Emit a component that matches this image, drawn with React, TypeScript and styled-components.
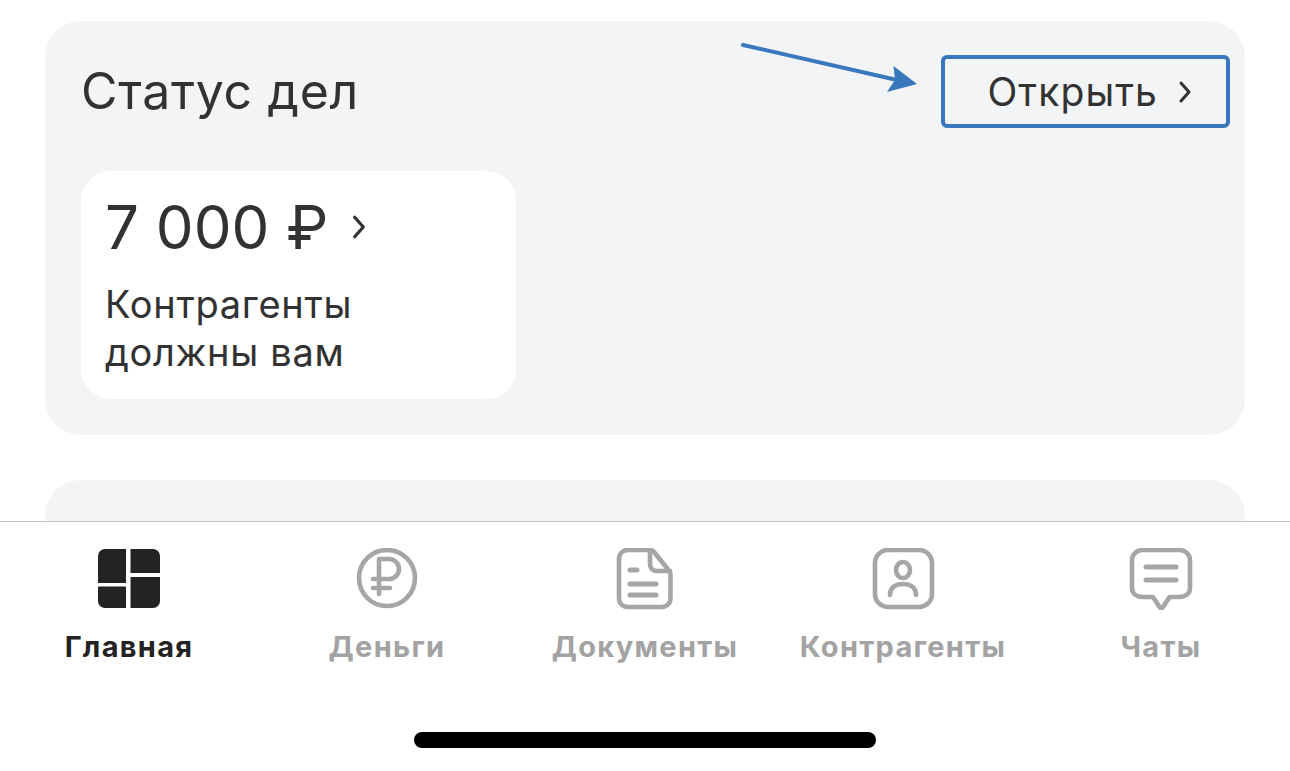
import React from 'react';
import styled, { createGlobalStyle } from 'styled-components';

const Global = createGlobalStyle`
  html, body { margin: 0; padding: 0; background: #fff; }
  body { font-family: Inter, "Noto Sans", sans-serif; }
`;

const Screen = styled.div`
  position: relative;
  width: 1290px;
  height: 771px;
  display: flex;
  flex-direction: column;
  overflow: hidden;
  background: #fff;
`;

const Content = styled.main`
  flex: 1;
  min-height: 0;
  overflow: hidden;
  display: flex;
  flex-direction: column;
  gap: 45px;
  padding: 21px 45px 0;
`;

const Card = styled.section`
  flex: none;
  background: #f2f4f6;
  border-radius: 36px;
  padding: 34px 15px 36px 36px;
`;

const CardStub = styled.section`
  flex: none;
  height: 200px;
  background: #f2f4f6;
  border-radius: 36px;
`;

const CardHeader = styled.header`
  display: flex;
  align-items: center;
  justify-content: space-between;
  margin-bottom: 43px;
`;

const Title = styled.h2`
  margin: 0;
  font-size: 50px;
  font-weight: 400;
  line-height: 73px;
  letter-spacing: 0.7px;
  color: #323232;
`;

const OpenButton = styled.button`
  box-sizing: border-box;
  width: 289px;
  height: 73px;
  display: flex;
  align-items: center;
  justify-content: flex-end;
  gap: 20px;
  padding: 0 34px 0 0;
  border: 4.500px solid #3a78bd;
  border-radius: 6px;
  background: transparent;
  font: 400 39px/44px Inter, sans-serif;
  letter-spacing: 1.100px;
  color: #323232;
`;

const Tile = styled.article`
  box-sizing: border-box;
  width: 435px;
  height: 228px;
  padding: 21px 24px 0;
  background: #fff;
  border-radius: 30px;
`;

const Amount = styled.div`
  display: flex;
  align-items: center;
  gap: 24px;
  font-size: 60px;
  line-height: 70px;
  color: #323232;
`;

const TileLabel = styled.p`
  margin: 18px 0 0;
  font-size: 38px;
  line-height: 48px;
  letter-spacing: 0.7px;
  color: #323232;
`;

const ArrowMark = styled.svg`
  position: absolute;
  left: 0;
  top: 0;
  pointer-events: none;
`;

const TabBar = styled.nav`
  flex: none;
  box-sizing: border-box;
  height: 250px;
  background: #fff;
  border-top: 1px solid #c4c4c6;
  display: flex;
  flex-direction: column;
  align-items: center;
`;

const Tabs = styled.div`
  width: 100%;
  display: grid;
  grid-template-columns: repeat(5, 258px);
  padding-top: 26px;
`;

const Tab = styled.div<{ $active?: boolean }>`
  display: flex;
  flex-direction: column;
  align-items: center;
  gap: 19px;
  color: ${p => (p.$active ? '#232323' : '#a3a3a3')};
  font-size: 29px;
  font-weight: 700;
  line-height: 36px;
  letter-spacing: 1.300px;
  white-space: nowrap;
`;

const TabIcon = styled.svg`
  display: block;
  width: 64px;
  height: 62px;
  fill: none;
  stroke: #a6a6a6;
  stroke-width: 4.600;
  stroke-linecap: round;
  stroke-linejoin: round;
`;

const HomeIndicator = styled.div`
  width: 462px;
  height: 16px;
  margin-top: 67px;
  border-radius: 8px;
  background: #000;
`;

const Chevron = ({ w, h }: { w: number; h: number }) => (
  <svg width={w} height={h} viewBox="0 0 12 24" fill="none" stroke="#323232" strokeWidth="3" strokeLinecap="round" strokeLinejoin="round">
    <path d="M2 3 10 12 2 21" />
  </svg>
);

const tabs = [
  {
    label: 'Главная',
    active: true,
    icon: (
      <g fill="#232323" stroke="none">
        <path d="M8 1h21v34H1V8a7 7 0 0 1 7-7Z" />
        <path d="M33.500 1H56a7 7 0 0 1 7 7v17H33.500Z" />
        <path d="M1 38.500h28V60H8a7 7 0 0 1-7-7Z" />
        <path d="M33.500 29H63V53a7 7 0 0 1-7 7H33.500Z" />
      </g>
    ),
  },
  {
    label: 'Деньги',
    icon: (
      <>
        <circle cx="32" cy="30" r="28" />
        <path d="M24 46V11h10a10 10 0 0 1 0 20H18M18 40h17" />
      </>
    ),
  },
  {
    label: 'Документы',
    icon: (
      <>
        <path d="M15 2h22c2 0 3 .6 4 2l14.500 18c1 1.200 2 2.300 2 4v24c0 5.500-4 9-9 9H15c-5 0-9-3.500-9-9V11c0-5.500 4-9 9-9Z" />
        <path d="M37 3v13c0 4 3 7 7 7h13" />
        <path d="M17 22h7M17 36h26M17 47h26" strokeWidth="5" />
      </>
    ),
  },
  {
    label: 'Контрагенты',
    icon: (
      <>
        <rect x="4" y="2" width="57" height="57" rx="13" />
        <ellipse cx="32" cy="22" rx="7" ry="8" />
        <path d="M19 47c0-7 5-11 13-11s13 4 13 11" />
      </>
    ),
  },
  {
    label: 'Чаты',
    icon: (
      <>
        <path d="M14 2h36c6 0 11 4 11 10v28c0 6-5 9-11 9H40.500l-6.500 10c-1 1.500-2.500 1.500-3.500 0L24 49H14C8 49 3 46 3 40V12C3 6 8 2 14 2Z" />
        <path d="M17 19h30M17 32h30" strokeWidth="5" />
      </>
    ),
  },
];

export default function App() {
  return (
    <>
      <Global />
      <Screen>
        <Content>
          <Card>
            <CardHeader>
              <Title>Статус дел</Title>
              <OpenButton>
                Открыть
                <Chevron w={14} h={24} />
              </OpenButton>
            </CardHeader>
            <Tile>
              <Amount>
                7 000 ₽
                <Chevron w={14} h={26} />
              </Amount>
              <TileLabel>
                Контрагенты
                <br />
                должны вам
              </TileLabel>
            </Tile>
          </Card>
          <CardStub />
        </Content>
        <TabBar>
          <Tabs>
            {tabs.map(t => (
              <Tab key={t.label} $active={t.active}>
                <TabIcon viewBox="0 0 64 62">{t.icon}</TabIcon>
                {t.label}
              </Tab>
            ))}
          </Tabs>
          <HomeIndicator />
        </TabBar>
        <ArrowMark width="1290" height="771" viewBox="0 0 1290 771">
          <path d="M743 45 897 80" fill="none" stroke="#3a78bd" strokeWidth="4" strokeLinecap="round" />
          <path d="M917 84 887 92 895 80 893.500 66Z" fill="#3a78bd" />
        </ArrowMark>
      </Screen>
    </>
  );
}
